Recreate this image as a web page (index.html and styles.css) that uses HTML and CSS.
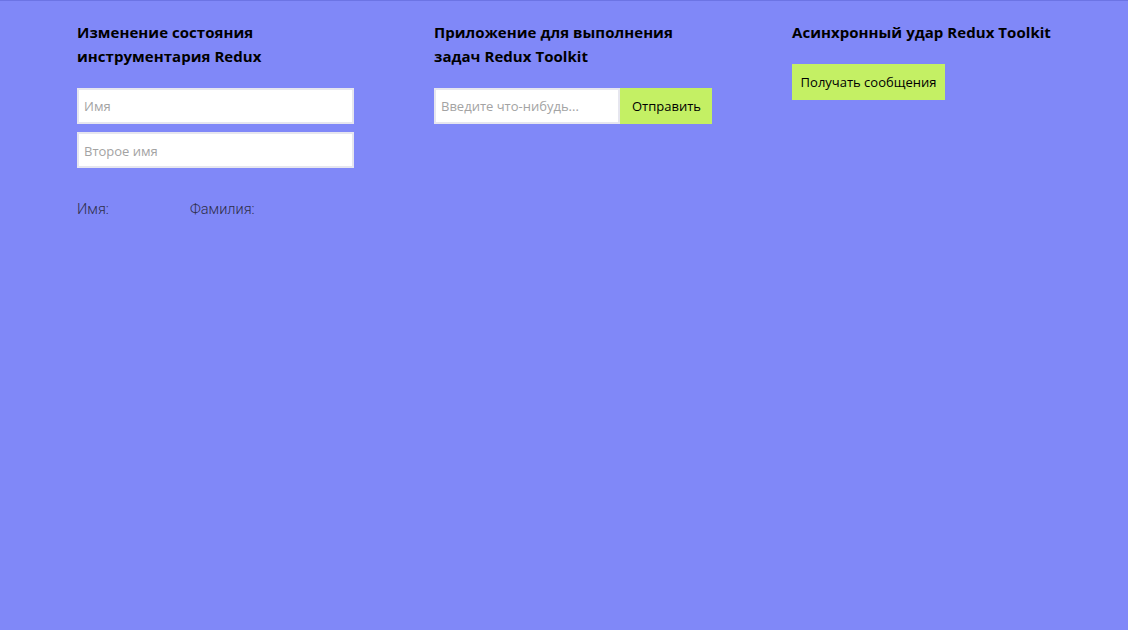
FILE: index.html
```html
<!DOCTYPE html>
<html lang="ru">
<head>
<meta charset="utf-8">
<title>Redux Toolkit</title>
<link rel="stylesheet" href="styles.css">
</head>
<body>
<main class="page">
  <section class="col">
    <h2 class="title">Изменение состояния<br>инструментария Redux</h2>
    <div class="fields">
      <input class="field" type="text" placeholder="Имя">
      <input class="field" type="text" placeholder="Второе имя">
    </div>
    <div class="names">
      <span class="name name-first">Имя:</span>
      <span class="name">Фамилия:</span>
    </div>
  </section>
  <section class="col">
    <h2 class="title">Приложение для выполнения<br>задач Redux Toolkit</h2>
    <form class="todo">
      <input class="field todo-input" type="text" placeholder="Введите что-нибудь...">
      <button class="btn" type="button">Отправить</button>
    </form>
  </section>
  <section class="col">
    <h2 class="title">Асинхронный удар Redux Toolkit</h2>
    <button class="btn btn-fetch" type="button">Получать сообщения</button>
  </section>
</main>
</body>
</html>
```
FILE: styles.css
```css
html, body {
  margin: 0;
  padding: 0;
  height: 100%;
}
body {
  background: #8088f8;
  border-top: 1px solid #6c74e4;
  box-sizing: border-box;
  font-family: "Open Sans", "Noto Sans", sans-serif;
  color: #000;
}
.page {
  display: grid;
  grid-template-columns: 357px 358px auto;
  padding: 19px 0 0 77px;
  align-items: start;
}
.col {
  display: flex;
  flex-direction: column;
  align-items: flex-start;
}
.title {
  margin: 0;
  font-size: 15px;
  font-weight: 700;
  line-height: 24px;
  letter-spacing: 0.05px;
}
.fields {
  display: flex;
  flex-direction: column;
  gap: 8px;
  margin-top: 20px;
}
.field {
  box-sizing: border-box;
  width: 277px;
  height: 36px;
  border: 2px solid #e6e6ef;
  background: #fff;
  padding: 0 5px;
  font-family: "Open Sans", "Noto Sans", sans-serif;
  font-size: 13px;
  outline: none;
  margin: 0;
}
.field + .field {
  padding-top: 1px;
}
.field::placeholder {
  color: #a3a3a3;
}
.names {
  display: flex;
  margin-top: 33px;
  font-family: Roboto, sans-serif;
  font-weight: 300;
  font-size: 14.5px;
  color: #2e2e4a;
  line-height: 18px;
}
.name-first {
  width: 113px;
}
.todo {
  display: flex;
  margin: 20px 0 0;
}
.todo-input {
  width: 186px;
}
.btn {
  box-sizing: border-box;
  height: 36px;
  border: none;
  background: #c4f064;
  color: #000;
  font-family: "Open Sans", "Noto Sans", sans-serif;
  font-size: 13px;
  padding: 0 12px;
  margin: 0;
  cursor: pointer;
}
.todo .btn {
  width: 92px;
  padding: 0 0 0 1px;
}
.btn-fetch {
  margin-top: 20px;
  width: 153px;
  padding: 0;
}
```
